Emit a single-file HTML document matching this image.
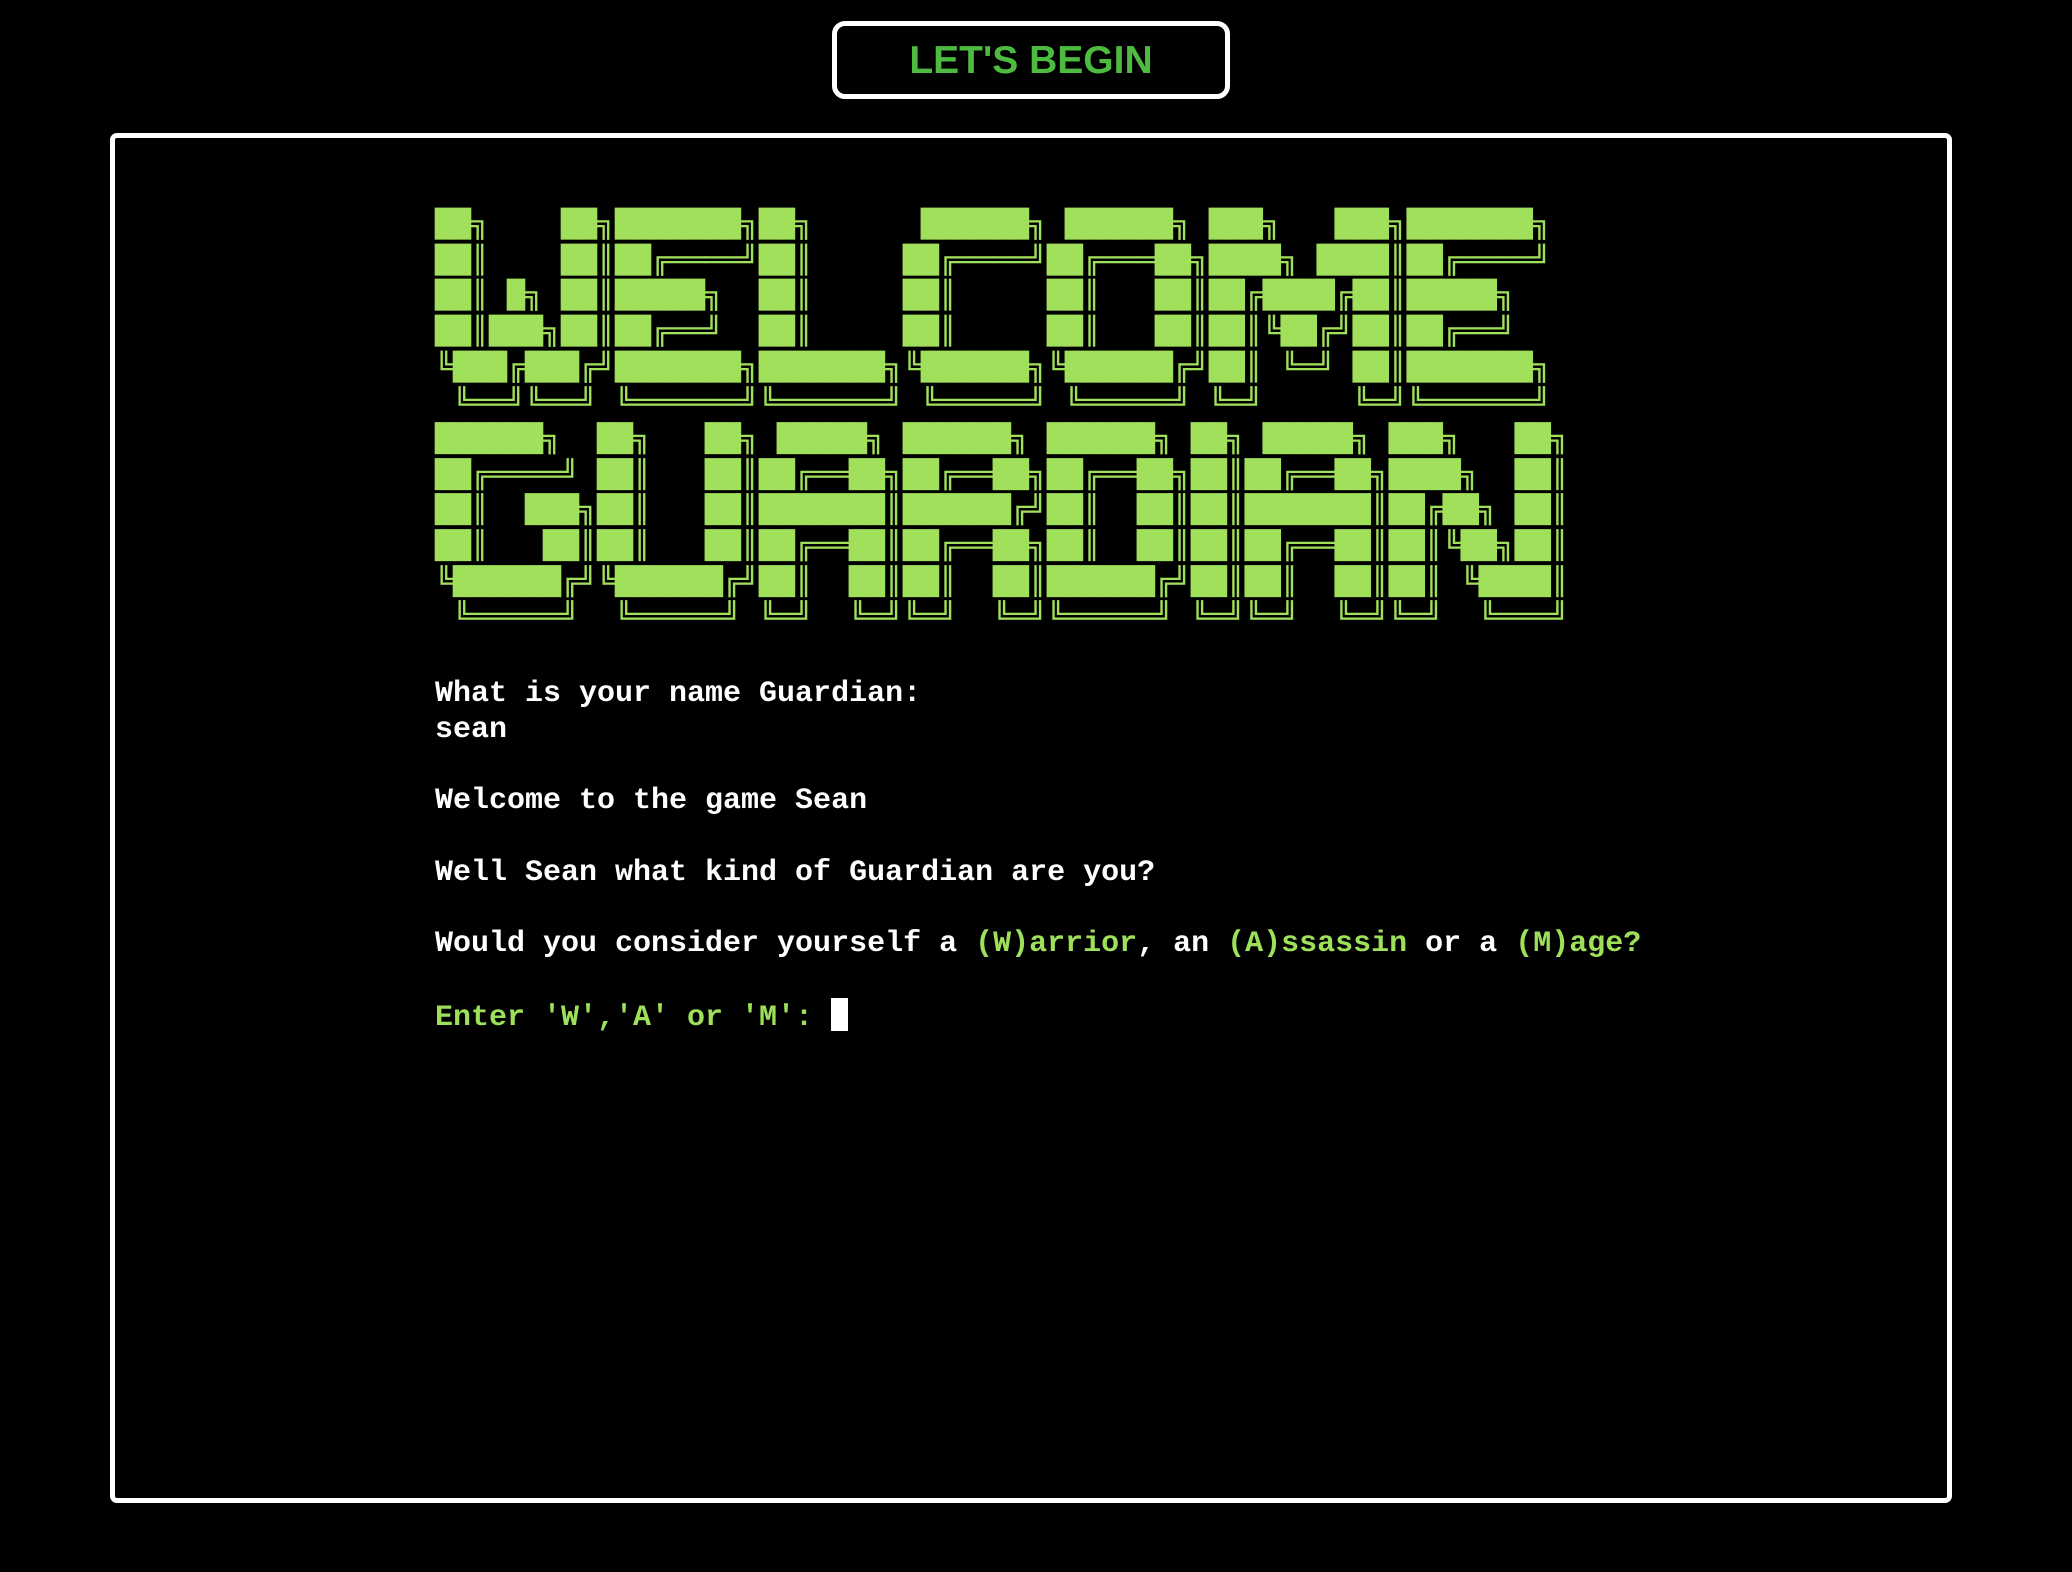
<!DOCTYPE html>
<html><head><meta charset="utf-8"><style>
html,body{margin:0;padding:0;background:#000;width:2072px;height:1572px;overflow:hidden}
.btn{position:absolute;left:832px;top:21px;height:68px;border:5px solid #fff;border-radius:13px;width:388px;
color:#4dbb3f;font:bold 39px "Liberation Sans",Arial,sans-serif;text-align:center;line-height:70px;}
.box{position:absolute;left:110px;top:133px;width:1832px;height:1360px;border:5px solid #fff;border-radius:7px}
.art{position:absolute;left:435px;top:207px;margin:0;font:29.9px/39.67px "DejaVu Sans Mono",monospace;color:#a0e05a;white-space:pre;transform:scaleY(0.9);transform-origin:0 0}
.txt{position:absolute;left:435px;top:677px;margin:0;font:bold 30px/35.7px "Liberation Mono",monospace;color:#fff;white-space:pre}
.g{color:#9de15a}
.cur{display:inline-block;width:17px;height:33px;background:#fff;vertical-align:-6px}
</style></head><body>
<div class="btn">LET'S BEGIN</div>
<div class="box"></div>
<div class="art">██╗    ██╗███████╗██╗      ██████╗ ██████╗ ███╗   ███╗███████╗
██║    ██║██╔════╝██║     ██╔════╝██╔═══██╗████╗ ████║██╔════╝
██║ █╗ ██║█████╗  ██║     ██║     ██║   ██║██╔████╔██║█████╗
██║███╗██║██╔══╝  ██║     ██║     ██║   ██║██║╚██╔╝██║██╔══╝
╚███╔███╔╝███████╗███████╗╚██████╗╚██████╔╝██║ ╚═╝ ██║███████╗
 ╚══╝╚══╝ ╚══════╝╚══════╝ ╚═════╝ ╚═════╝ ╚═╝     ╚═╝╚══════╝
██████╗  ██╗   ██╗ █████╗ ██████╗ ██████╗ ██╗ █████╗ ███╗   ██╗
██╔════╝ ██║   ██║██╔══██╗██╔══██╗██╔══██╗██║██╔══██╗████╗  ██║
██║  ███╗██║   ██║███████║██████╔╝██║  ██║██║███████║██╔██╗ ██║
██║   ██║██║   ██║██╔══██║██╔══██╗██║  ██║██║██╔══██║██║╚██╗██║
╚██████╔╝╚██████╔╝██║  ██║██║  ██║██████╔╝██║██║  ██║██║ ╚████║
 ╚═════╝  ╚═════╝ ╚═╝  ╚═╝╚═╝  ╚═╝╚═════╝ ╚═╝╚═╝  ╚═╝╚═╝  ╚═══╝</div>
<div class="txt">What is your name Guardian:
sean

Welcome to the game Sean

Well Sean what kind of Guardian are you?

Would you consider yourself a <span class="g">(W)arrior</span>, an <span class="g">(A)ssassin</span> or a <span class="g">(M)age?</span>

<span class="g">Enter 'W','A' or 'M': </span><span class="cur"></span></div>
</body></html>
